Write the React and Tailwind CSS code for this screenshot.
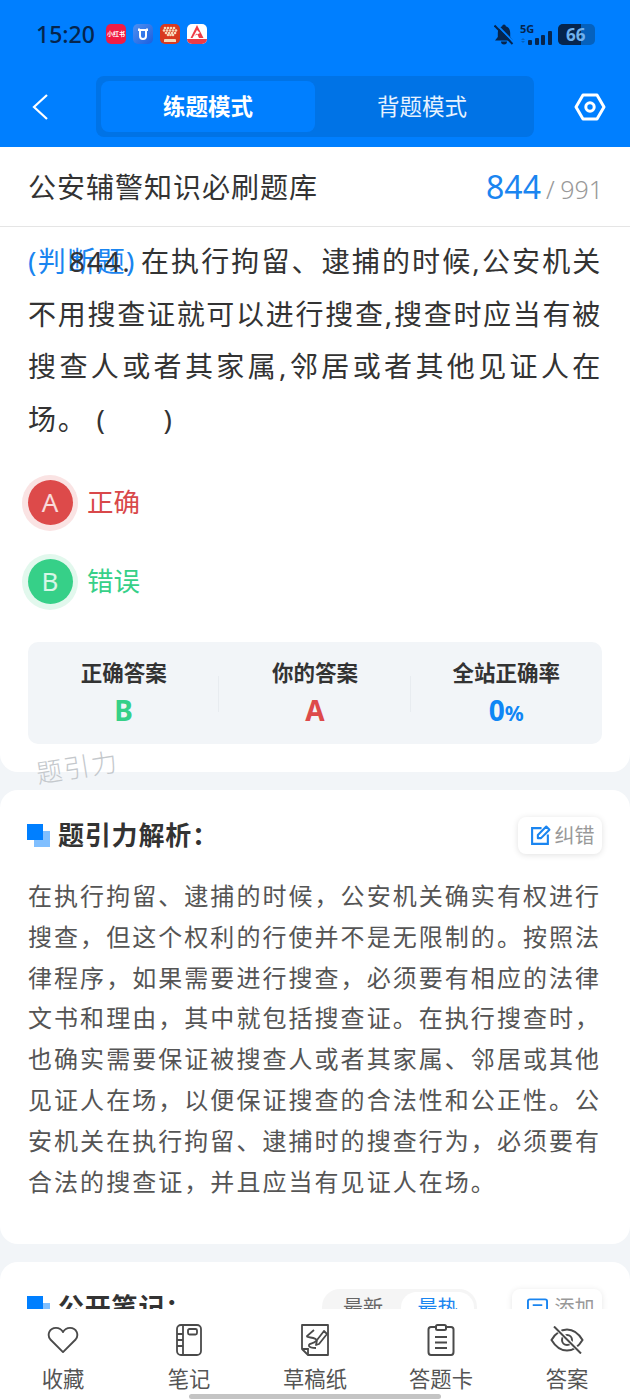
const FONT = { fontFamily: '"Noto Sans", "Noto Sans CJK SC", sans-serif' };

// full-width punctuation, written as escapes so it stays full-width
const C = "\uFF0C";
const COLON = "\uFF1A";

const ANALYSIS = [
  "在执行拘留、逮捕的时候",
  "公安机关确实有权进行搜查",
  "但这个权利的行使并不是无限制的。按照法律程序",
  "如果需要进行搜查",
  "必须要有相应的法律文书和理由",
  "其中就包括搜查证。在执行搜查时",
  "也确实需要保证被搜查人或者其家属、邻居或其他见证人在场",
  "以便保证搜查的合法性和公正性。公安机关在执行拘留、逮捕时的搜查行为",
  "必须要有合法的搜查证",
  "并且应当有见证人在场。",
].join(C);

const HEART_DOTS = [
  [4, 4], [7, 4], [10, 4], [13, 4],
  [3, 6.5], [6, 6.5], [9, 6.5], [12, 6.5], [15, 6.5],
  [5, 9], [8, 9], [11, 9], [14, 9],
  [7, 11], [9.5, 11], [12, 11],
];

function AppIcons() {
  return (
    <div className="flex items-center gap-[7px] ml-[11px]">
      <div className="w-[20px] h-[20px] rounded-[5px] bg-[#f01c45] flex items-center justify-center text-white text-[6px] font-bold leading-none">小红书</div>
      <div className="w-[20px] h-[20px] rounded-[5px] bg-gradient-to-br from-[#4f8ff0] to-[#1a5fe0] flex items-center justify-center">
        <svg width="14" height="14" viewBox="0 0 14 14" fill="none" stroke="#fff" strokeWidth="2">
          <path d="M3 1.5 V3 H11 V1.5 M4 3 V9 a3 3 0 0 0 6 0 V3" />
        </svg>
      </div>
      <div className="w-[20px] h-[20px] rounded-[5px] bg-[#d9391f] overflow-hidden flex flex-col items-center">
        <svg width="18" height="15" viewBox="0 0 18 15" fill="#f6d7b8">
          {HEART_DOTS.map(([cx, cy]) => (
            <circle key={`${cx}-${cy}`} cx={cx} cy={cy} r="1.3" />
          ))}
        </svg>
        <div className="w-[12px] h-[3px] bg-[#f6d7b8] rounded-t-[1px]" />
      </div>
      <div className="w-[20px] h-[20px] rounded-[5px] bg-white overflow-hidden flex flex-col items-center">
        <svg width="16" height="15" viewBox="0 0 16 15" fill="#ee3b46">
          <path d="M8 1 L14.5 14 H10 L8 9.5 L5 12 L11 9 L8 6 L3.5 14 H1.5 Z" />
        </svg>
        <div className="w-full h-[5px] bg-[#ee3b46]" />
      </div>
    </div>
  );
}

function StatusRight() {
  return (
    <div className="flex items-center ml-auto">
      <svg width="20" height="21" viewBox="0 0 20 21" fill="#06254d">
        <path d="M10 0.5 a1.8 1.8 0 0 1 1.8 1.8 C15 3.2 16.2 6 16.2 9 V13 L19 16.5 H1 L3.8 13 V9 C3.8 6 5 3.2 8.2 2.3 A1.8 1.8 0 0 1 10 0.5 Z" />
        <path d="M7 17.6 H13 A3 3 0 0 1 7 17.6 Z" />
        <path d="M2.5 0.5 L20 18.5" stroke="#007fff" strokeWidth="2" />
        <path d="M0.5 1.5 L18.5 20" stroke="#06254d" strokeWidth="2" />
      </svg>
      <div className="ml-[6px] w-[32px] h-[21px] relative">
        <span className="absolute left-0 top-[-1px] text-[#06254d] text-[11px] font-bold leading-[11px]">5G</span>
        <div className="absolute left-[1px] bottom-[2px] flex flex-col gap-[1px]">
          <div className="w-0 h-0 border-x-[2px] border-x-transparent border-b-[2px] border-b-[#0561bd]" />
          <div className="w-0 h-0 border-x-[2px] border-x-transparent border-t-[2px] border-t-[#0561bd]" />
        </div>
        <div className="absolute left-[8px] bottom-0 flex items-end gap-[2.5px]">
          <div className="w-[4px] h-[5px] bg-[#06254d] rounded-[1px]" />
          <div className="w-[4px] h-[7px] bg-[#06254d] rounded-[1px]" />
          <div className="w-[4px] h-[10px] bg-[#06254d] rounded-[1px]" />
          <div className="w-[4px] h-[14px] bg-[#06254d] rounded-[1px]" />
        </div>
      </div>
      <div className="ml-[6px] w-[37px] h-[21px] rounded-[5px] bg-[#0561bd] overflow-hidden relative">
        <div className="h-full w-[23px] bg-[#06254d]" />
        <span className="absolute left-[8px] top-0 text-[#6fb1ee] text-[17px] font-bold leading-[21px]">66</span>
      </div>
    </div>
  );
}

function TopBar() {
  return (
    <div className="bg-[#007fff] h-[147px] shrink-0 flex flex-col">
      <div className="flex items-center h-[24px] mt-[22px] pl-[36px] pr-[35px]">
        <span className="text-[#06254d] text-[23px] font-medium leading-none">15:20</span>
        <AppIcons />
        <StatusRight />
      </div>
      <div className="flex items-center mt-[30px] pl-[32px] pr-[24px]">
        <svg width="16" height="28" viewBox="0 0 16 28" fill="none" stroke="#fff" strokeWidth="2.2" className="shrink-0">
          <path d="M15 2 L2 14 L15 26" />
        </svg>
        <div className="ml-[48px] w-[438px] h-[61px] bg-[#0073e6] rounded-[8px] p-[5px] flex">
          <div className="w-[214px] h-[51px] bg-[#007fff] rounded-[8px] flex items-center justify-center text-white text-[22.5px] font-bold">练题模式</div>
          <div className="flex-1 flex items-center justify-center text-[#e6f2ff] text-[22.5px]">背题模式</div>
        </div>
        <svg width="32" height="28" viewBox="0 0 32 28" fill="none" stroke="#fff" strokeWidth="3" className="ml-auto shrink-0">
          <path d="M9 2 H23 L30 14 L23 26 H9 L2 14 Z" strokeLinejoin="round" />
          <circle cx="16" cy="14" r="4.2" />
        </svg>
      </div>
    </div>
  );
}

function Option({ letter, text, solid, ring, color }) {
  return (
    <div className="flex items-center">
      <div className={`w-[56px] h-[56px] rounded-full ${ring} flex items-center justify-center`}>
        <div className={`w-[45px] h-[45px] rounded-full ${solid} flex items-center justify-center text-white/80 text-[26px]`}>{letter}</div>
      </div>
      <span className={`ml-[9px] text-[26.5px] ${color}`}>{text}</span>
    </div>
  );
}

function ResultCell({ label, children, border }) {
  return (
    <div className="flex-1 relative flex flex-col items-center pt-[16px]">
      {border && <div className="absolute right-0 top-[34px] h-[36px] w-px bg-[#e8ecf0]" />}
      <span className="text-[#333] text-[21.5px] font-bold leading-[30px]">{label}</span>
      <div className="mt-[2px]">{children}</div>
    </div>
  );
}

function QuestionCard() {
  return (
    <div className="bg-white rounded-b-[18px] h-[545px] shrink-0 relative px-[28px] pt-[8px]">
      <div className="text-[28px] leading-[52.7px] tracking-[1.7px] text-[#333] text-justify relative">
        <span className="absolute left-[41px] top-0">844.</span>
        <span className="text-[#1a85f0] tracking-[1px] mr-[5px]">(判断题)</span>在执行拘留、逮捕的时候,公安机关不用搜查证就可以进行搜查,搜查时应当有被搜查人或者其家属,邻居或者其他见证人在场。 (<span className="inline-block w-[57px]" />)
      </div>
      <div className="flex flex-col gap-[23px] mt-[29px] -ml-[6px]">
        <Option letter="A" text="正确" ring="bg-[#fae3e3]" solid="bg-[#dd4a4a]" color="text-[#d9484a]" />
        <Option letter="B" text="错误" ring="bg-[#e2f8ed]" solid="bg-[#36d088]" color="text-[#36d088]" />
      </div>
      <div className="mt-[32px] h-[102px] bg-[#f2f5f8] rounded-[10px] flex">
        <ResultCell label="正确答案" border>
          <span className="text-[#36d088] text-[28px] font-bold leading-[40px]">B</span>
        </ResultCell>
        <ResultCell label="你的答案" border>
          <span className="text-[#dd4a4a] text-[28px] font-bold leading-[40px]">A</span>
        </ResultCell>
        <ResultCell label="全站正确率">
          <span className="text-[#0f86f5] text-[28px] font-bold leading-[40px]">0<span className="text-[21px]">%</span></span>
        </ResultCell>
      </div>
      <span className="absolute left-[36px] bottom-[-8px] text-[#c4c8cc] text-[26px] font-light tracking-[1.5px] leading-none -rotate-[9deg] z-10">题引力</span>
    </div>
  );
}

function SectionMark() {
  return (
    <div className="relative w-[23px] h-[23px] shrink-0 -ml-[1px]">
      <div className="absolute right-0 bottom-0 w-[16px] h-[16px] bg-[#80bfff]" />
      <div className="absolute left-0 top-0 w-[16px] h-[16px] bg-[#007fff]" />
    </div>
  );
}

function AnalysisCard() {
  return (
    <div className="bg-white rounded-[18px] mt-[18px] h-[454px] shrink-0 px-[28px] pt-[27px]">
      <div className="flex items-center h-[37px]">
        <SectionMark />
        <span className="ml-[8px] text-[#333] text-[26px] tracking-[0.8px] font-bold">题引力解析{COLON}</span>
        <div className="ml-auto w-[84px] h-[37px] rounded-[8px] bg-white shadow-[0_1px_6px_rgba(0,0,0,0.12)] flex items-center justify-center gap-[4px] pl-[4px]">
          <svg width="21" height="21" viewBox="0 0 20 20" fill="none" stroke="#1a85f0" strokeWidth="2">
            <path d="M11 3 H2 V18 H17 V9" />
            <path d="M7.5 12.5 V9.5 L15.5 1.5 L18.5 4.5 L10.5 12.5 Z" strokeLinejoin="round" />
          </svg>
          <span className="text-[#999] text-[20px]">纠错</span>
        </div>
      </div>
      <p className="mt-[22px] text-[#555] text-[24px] leading-[40.8px] tracking-[2.05px]">{ANALYSIS}</p>
    </div>
  );
}

function NotesCard() {
  return (
    <div className="bg-white rounded-t-[18px] mt-[18px] h-[60px] shrink-0 px-[28px] pt-[27px] flex items-start">
      <div className="flex items-center h-[37px] w-full">
        <SectionMark />
        <span className="ml-[8px] text-[#333] text-[26px] tracking-[0.8px] font-bold">公开笔记{COLON}</span>
        <div className="ml-auto flex items-center w-[155px] h-[37px] rounded-[18px] bg-[#f5f5f5] p-[3px]">
          <span className="w-[76px] text-center text-[#666] text-[20px]">最新</span>
          <span className="flex-1 h-full rounded-[16px] bg-white text-center text-[#1a85f0] text-[20px] leading-[31px]">最热</span>
        </div>
        <div className="ml-[35px] w-[90px] h-[37px] rounded-[8px] bg-white shadow-[0_1px_6px_rgba(0,0,0,0.1)] flex items-center justify-center gap-[7px] pl-[7px]">
          <svg width="21" height="20" viewBox="0 0 22 20" fill="none" stroke="#1a85f0" strokeWidth="2">
            <rect x="1" y="1" width="20" height="18" rx="2" />
            <path d="M6 7 H16 M6 12 H13" />
          </svg>
          <span className="text-[#999] text-[20px]">添加</span>
        </div>
      </div>
    </div>
  );
}

const NAV_STROKE = "#4a4a4a";

const NavIcons = {
  heart: (
    <svg width="32" height="28" viewBox="0 0 34 30" fill="none" stroke={NAV_STROKE} strokeWidth="2">
      <path d="M17 28 L3.5 14.5 C-0.5 9.5 2.5 2 9.5 2 C12.8 2 15.5 3.8 17 6.5 C18.5 3.8 21.2 2 24.5 2 C31.5 2 34.5 9.5 30.5 14.5 Z" strokeLinejoin="round" />
    </svg>
  ),
  notebook: (
    <svg width="26" height="32" viewBox="0 0 26 32" fill="none" stroke={NAV_STROKE} strokeWidth="1.8">
      <rect x="1" y="1" width="24" height="30" rx="4" />
      <path d="M7 1 V31 M1 10 H7 M1 16 H7 M1 22 H7" />
      <rect x="12" y="5" width="9" height="5.5" rx="1.5" />
    </svg>
  ),
  draft: (
    <svg width="30" height="32" viewBox="0 0 30 32" fill="none" stroke={NAV_STROKE} strokeWidth="1.8">
      <path d="M8 31 H28 V1 H2 V25 Z" strokeLinejoin="round" />
      <path d="M2 25 H8 V31" />
      <path d="M14 6 L7 12 C6 14 18 13 16 17 C14 20 8 19 9 22 C10 24 14 24 16 24" />
      <path d="M19 20 L27 10 L24 7 L17 16 L16 21 Z" fill="#fff" strokeLinejoin="round" />
    </svg>
  ),
  card: (
    <svg width="28" height="32" viewBox="0 0 28 32" fill="none" stroke={NAV_STROKE} strokeWidth="2">
      <path d="M9 3 H4 Q1.5 3 1.5 5.5 V28 Q1.5 31 4 31 H24 Q26.5 31 26.5 28 V5.5 Q26.5 3 24 3 H19" />
      <rect x="9" y="1" width="10" height="5" rx="1.5" />
      <path d="M8 13 H20 M8 18.5 H20 M8 24 H20" />
    </svg>
  ),
  eyeOff: (
    <svg width="34" height="28" viewBox="0 0 34 28" fill="none" stroke={NAV_STROKE} strokeWidth="2">
      <path d="M1.5 14 C6 6.5 11 3.5 17 3.5 C23 3.5 28 6.5 32.5 14 C28 21.5 23 24.5 17 24.5 C11 24.5 6 21.5 1.5 14 Z" />
      <circle cx="17" cy="14" r="5" />
      <path d="M5 1 L31 27" stroke="#fff" strokeWidth="4" />
      <path d="M4 0.5 L31 27.5" />
    </svg>
  ),
};

function NavItem({ icon, label }) {
  return (
    <div className="flex-1 flex flex-col items-center">
      <div className="h-[36px] flex items-center justify-center">{NavIcons[icon]}</div>
      <span className="mt-[7px] text-[#555] text-[21.3px] leading-[28px]">{label}</span>
    </div>
  );
}

function BottomNav() {
  return (
    <div className="bg-white h-[91px] shrink-0 relative pt-[13px] flex">
      <NavItem icon="heart" label="收藏" />
      <NavItem icon="notebook" label="笔记" />
      <NavItem icon="draft" label="草稿纸" />
      <NavItem icon="card" label="答题卡" />
      <NavItem icon="eyeOff" label="答案" />
      <div className="absolute left-[189px] bottom-[1px] w-[252px] h-[5px] rounded-full bg-[#c4c4c4]" />
    </div>
  );
}

export default function App() {
  return (
    <div style={FONT} className="w-[630px] h-[1400px] overflow-hidden flex flex-col bg-[#f2f5f8]">
      <TopBar />
      <div className="bg-white h-[80px] shrink-0 border-b border-[#e5e5e5] flex items-center pl-[28px] pr-[27px]">
        <span className="text-[#333] text-[28px] tracking-[1px]">公安辅警知识必刷题库</span>
        <div className="ml-auto flex items-baseline">
          <span className="text-[#1a85f0] text-[32px]">844</span>
          <span className="text-[#999] text-[25px] font-light ml-[5px] tracking-[0.5px]">/</span>
          <span className="text-[#999] text-[25px] font-light ml-[5px]">991</span>
        </div>
      </div>
      <div className="flex-1 overflow-hidden flex flex-col">
        <QuestionCard />
        <AnalysisCard />
        <NotesCard />
      </div>
      <BottomNav />
    </div>
  );
}
